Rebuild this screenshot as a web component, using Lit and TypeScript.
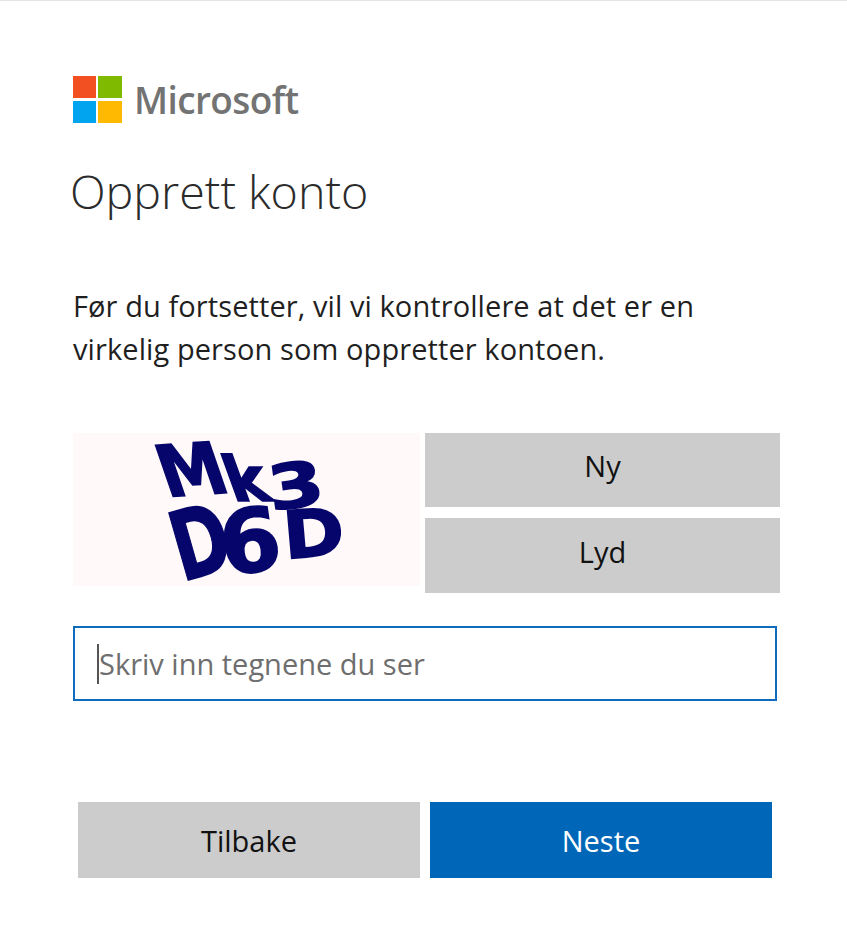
import { LitElement, html, css } from 'lit';
import { customElement } from 'lit/decorators.js';

@customElement('app-root')
export class AppRoot extends LitElement {
  static styles = css`
    :host {
      display: block;
      height: 948px;
      background: #fff;
      font-family: 'Open Sans', 'Noto Sans', sans-serif;
      color: #1b1b1b;
      overflow: hidden;
    }

    .page {
      border-top: 1px solid #e4e4e4;
      padding: 75px 67px 0 73px;
      height: 948px;
      box-sizing: border-box;
    }

    .brand {
      display: flex;
      align-items: center;
      gap: 12px;
      height: 47px;
    }

    .logo {
      display: grid;
      grid-template-columns: 23px 24px;
      grid-template-rows: 22px 22px;
      column-gap: 2px;
      row-gap: 3px;
      flex: none;
    }

    .logo span:nth-child(1) { background: #f25022; }
    .logo span:nth-child(2) { background: #7fba00; }
    .logo span:nth-child(3) { background: #00a4ef; }
    .logo span:nth-child(4) { background: #ffb900; }

    .wordmark {
      font-size: 37px;
      font-weight: 600;
      letter-spacing: -0.6px;
      color: #737373;
      line-height: 47px;
    }

    h1 {
      margin: 38px 0 0 -3px;
      font-size: 46.6px;
      line-height: 60px;
      font-weight: 300;
      color: #2b2b2b;
    }

    p {
      margin: 63px 0 0 0;
      font-size: 29px;
      line-height: 43px;
      letter-spacing: 0.09px;
      color: #1f1f1f;
    }

    .captcha {
      display: grid;
      grid-template-columns: 347px 355px;
      column-gap: 5px;
      margin-top: 63px;
    }

    .picture {
      height: 153px;
      background: #fff9f9;
    }

    .picture svg {
      display: block;
    }

    .picture text {
      font-family: 'DejaVu Sans', sans-serif;
      font-weight: 700;
      fill: #05056b;
      stroke: #05056b;
      stroke-width: 1.5px;
    }

    .actions {
      display: flex;
      flex-direction: column;
      gap: 11px;
    }

    button {
      border: none;
      padding: 0;
      background: #cccccc;
      color: #111;
      font: inherit;
      font-size: 29px;
    }

    .actions button {
      padding-bottom: 9px;
    }

    .actions button:first-child { height: 74px; }
    .actions button:last-child { height: 75px; }

    .field {
      display: flex;
      align-items: center;
      box-sizing: border-box;
      width: 704px;
      height: 75px;
      margin-top: 33px;
      padding-left: 22px;
      border: 2px solid #0f6cbd;
      font-size: 29px;
      color: #6e6e6e;
    }

    .caret {
      width: 2px;
      height: 40px;
      background: #555;
      flex: none;
    }

    .footer {
      display: grid;
      grid-template-columns: 342px 342px;
      column-gap: 10px;
      margin: 101px 0 0 5px;
    }

    .footer button {
      height: 76px;
    }

    .footer .primary {
      background: #0067b8;
      color: #fff;
    }
  `;

  render() {
    return html`
      <div class="page">
        <div class="brand">
          <div class="logo"><span></span><span></span><span></span><span></span></div>
          <div class="wordmark">Microsoft</div>
        </div>
        <h1>Opprett konto</h1>
        <p>Før du fortsetter, vil vi kontrollere at det er en<br />virkelig person som oppretter kontoen.</p>
        <div class="captcha">
          <div class="picture">
            <svg width="347" height="153" viewBox="0 0 347 153">
              <text font-size="72" transform="translate(94 64) rotate(-4) skewX(15) scale(0.92 1)">M</text>
              <text font-size="62" transform="translate(160 68) skewX(20)">k</text>
              <text font-size="62" transform="translate(198 78) rotate(-8) scale(1.3 1)">3</text>
              <text font-size="96" transform="translate(109 149) rotate(-16) scale(0.72 1)">D</text>
              <text font-size="88" transform="translate(151 143) rotate(-8)">6</text>
              <text font-size="66" transform="translate(212 126) rotate(-5) scale(1.12 1)">D</text>
            </svg>
          </div>
          <div class="actions">
            <button>Ny</button>
            <button>Lyd</button>
          </div>
        </div>
        <div class="field"><span class="caret"></span>Skriv inn tegnene du ser</div>
        <div class="footer">
          <button>Tilbake</button>
          <button class="primary">Neste</button>
        </div>
      </div>
    `;
  }
}
